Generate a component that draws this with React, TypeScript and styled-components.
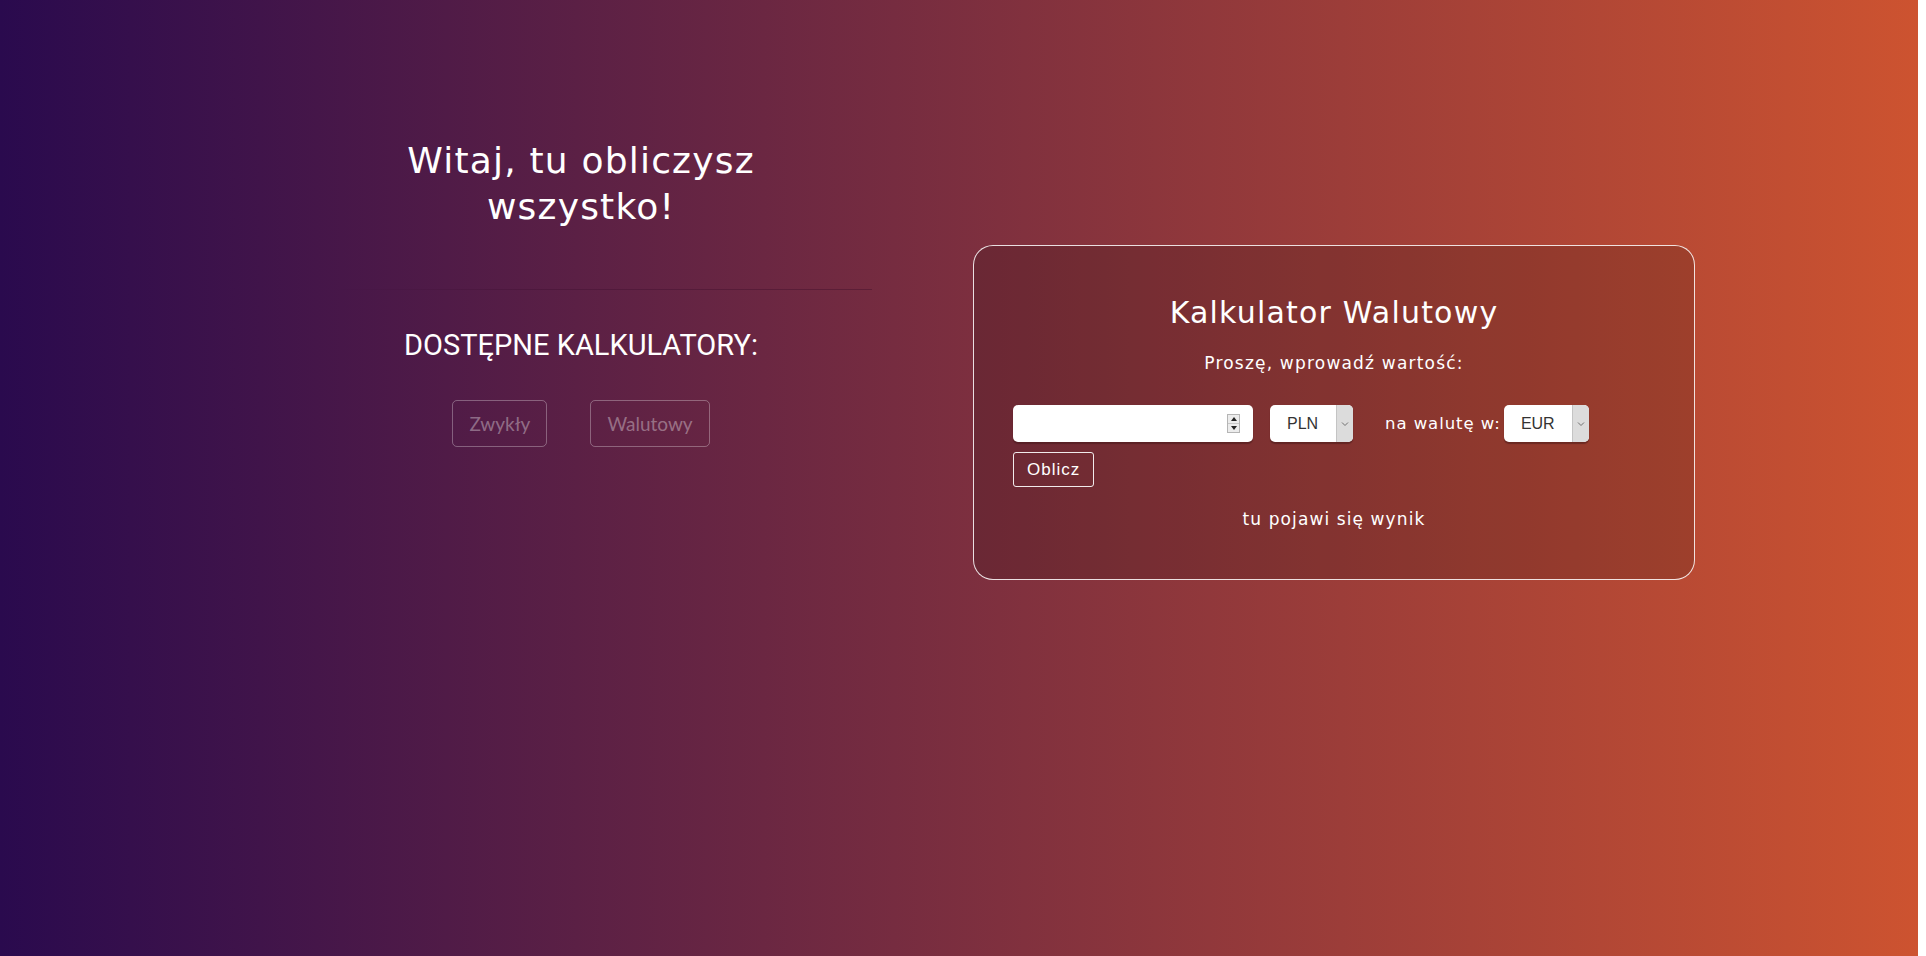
import React from "react";
import styled, { createGlobalStyle } from "styled-components";

const Global = createGlobalStyle`
  html, body { margin: 0; padding: 0; background: #ffffff; }
  body { font-family: "DejaVu Sans", sans-serif; }
  * { box-sizing: border-box; }
`;

const Page = styled.div`
  width: calc(100% - 8px);
  min-height: 100vh;
  background: linear-gradient(to right, #2a0a4e 0%, #cd5330 100%);
  display: flex;
  align-items: flex-start;
  color: #fff;
`;

const LeftColumn = styled.section`
  margin-left: 311px;
  width: 540px;
  padding-top: 138px;
  display: flex;
  flex-direction: column;
  align-items: center;
`;

const Welcome = styled.h1`
  margin: 0;
  font-family: "DejaVu Sans", sans-serif;
  font-weight: normal;
  font-size: 36px;
  line-height: 46px;
  letter-spacing: 1.2px;
  text-align: center;
  width: 400px;
  color: #fff;
`;

const Divider = styled.hr`
  align-self: stretch;
  margin: 59px 0 0 14px;
  width: 547px;
  height: 1px;
  border: 0;
  background: linear-gradient(to right, rgba(40, 0, 30, 0) 0%, rgba(40, 0, 30, 0.22) 40%, rgba(40, 0, 30, 0.3) 100%);
`;

const Subheading = styled.h2`
  margin: 38px 0 0 0;
  font-family: Roboto, sans-serif;
  font-weight: normal;
  font-size: 29px;
  line-height: 34px;
  text-transform: uppercase;
  color: #fff;
`;

const ButtonGroup = styled.div`
  display: flex;
  gap: 43px;
  margin-top: 38px;
`;

const NavButton = styled.button`
  height: 47px;
  padding: 0 16px;
  background: transparent;
  border: 1px solid rgba(255, 255, 255, 0.3);
  border-radius: 5px;
  font-family: Lato, sans-serif;
  font-size: 19px;
  color: rgba(255, 255, 255, 0.36);
  cursor: pointer;
`;

const Card = styled.section`
  margin-left: 122px;
  margin-top: 245px;
  width: 722px;
  height: 335px;
  border: 1px solid rgba(255, 255, 255, 0.85);
  border-radius: 20px;
  background: rgba(0, 0, 0, 0.15);
  padding: 49px 39px 0 39px;
  display: flex;
  flex-direction: column;
`;

const CardTitle = styled.h2`
  margin: 0;
  text-align: center;
  font-family: "DejaVu Sans", sans-serif;
  font-weight: normal;
  font-size: 30px;
  line-height: 36px;
  letter-spacing: 1.2px;
  color: #fff;
`;

const Prompt = styled.p`
  margin: 21px 0 0 0;
  text-align: center;
  font-size: 17px;
  line-height: 22px;
  letter-spacing: 1.2px;
  color: #fff;
`;

const Form = styled.form`
  margin-top: 31px;
  display: flex;
  flex-direction: column;
  align-items: flex-start;
  gap: 10px;
`;

const Controls = styled.div`
  display: flex;
  align-items: center;
`;

const NumberWrap = styled.div`
  position: relative;
  width: 240px;
  height: 37px;
`;

const NumberInput = styled.input`
  width: 100%;
  height: 100%;
  border: 0;
  border-radius: 5px;
  background: #fff;
  box-shadow: 0 2px 1px rgba(60, 20, 20, 0.45);
  padding: 0 30px 0 8px;
  font-family: "Liberation Sans", Arial, sans-serif;
  font-size: 16px;
  outline: none;
  -moz-appearance: textfield;
  &::-webkit-outer-spin-button,
  &::-webkit-inner-spin-button {
    -webkit-appearance: none;
    margin: 0;
  }
`;

const Spinner = styled.div`
  position: absolute;
  right: 13px;
  top: 9px;
  width: 13px;
  height: 19px;
  border: 1px solid #b5b5b5;
  background: #ececec;
  display: flex;
  flex-direction: column;
`;

const SpinHalf = styled.div<{ $down?: boolean }>`
  flex: 1;
  display: flex;
  align-items: center;
  justify-content: center;
  border-top: ${(p) => (p.$down ? "1px solid #c8c8c8" : "0")};
  &::after {
    content: "";
    width: 0;
    height: 0;
    border-left: 3px solid transparent;
    border-right: 3px solid transparent;
    ${(p) => (p.$down ? "border-top: 4px solid #222;" : "border-bottom: 4px solid #222;")}
  }
`;

const SelectBox = styled.div<{ $w: number; $ml: number }>`
  position: relative;
  width: ${(p) => p.$w}px;
  height: 37px;
  margin-left: ${(p) => p.$ml}px;
  border-radius: 5px;
  background: #fff;
  box-shadow: 0 2px 1px rgba(60, 20, 20, 0.45);
  overflow: hidden;
`;

const NativeSelect = styled.select`
  appearance: none;
  -webkit-appearance: none;
  width: 100%;
  height: 100%;
  border: 0;
  background: transparent;
  padding: 0 22px 0 17px;
  font-family: "Liberation Sans", Arial, sans-serif;
  font-size: 16px;
  color: #333;
  outline: none;
`;

const SelectArrow = styled.div`
  position: absolute;
  top: 0;
  right: 0;
  bottom: 0;
  width: 17px;
  background: #dcdcdc;
  border-left: 1px solid #c4c4c4;
  display: flex;
  align-items: center;
  justify-content: center;
  pointer-events: none;
`;

const Label = styled.span`
  margin-left: 32px;
  margin-right: 3px;
  font-size: 16.5px;
  letter-spacing: 0.95px;
  color: #fff;
  white-space: nowrap;
`;

const SubmitButton = styled.button`
  height: 35px;
  padding: 0 13px;
  background: transparent;
  border: 1px solid rgba(255, 255, 255, 0.9);
  border-radius: 3px;
  font-family: "Liberation Sans", Arial, sans-serif;
  font-size: 17px;
  letter-spacing: 1px;
  color: #fff;
  cursor: pointer;
`;

const Result = styled.p`
  margin: 21px 0 0 0;
  text-align: center;
  font-size: 17px;
  line-height: 22px;
  letter-spacing: 1.1px;
  color: #fff;
`;

const Chevron = () => (
  <svg width="8" height="6" viewBox="0 0 8 6" fill="none">
    <path d="M1 1.5 L4 4.5 L7 1.5" stroke="#707070" strokeWidth="1" />
  </svg>
);

const Select: React.FC<{ value: string; options: string[]; w: number; ml: number }> = ({ value, options, w, ml }) => (
  <SelectBox $w={w} $ml={ml}>
    <NativeSelect defaultValue={value}>
      {options.map((o) => (
        <option key={o} value={o}>
          {o}
        </option>
      ))}
    </NativeSelect>
    <SelectArrow>
      <Chevron />
    </SelectArrow>
  </SelectBox>
);

const currencies = ["PLN", "EUR", "USD", "GBP", "CHF"];

export default function App() {
  return (
    <>
      <Global />
      <Page>
        <LeftColumn>
          <Welcome>Witaj, tu obliczysz wszystko!</Welcome>
          <Divider />
          <Subheading>Dostępne kalkulatory:</Subheading>
          <ButtonGroup>
            <NavButton>Zwykły</NavButton>
            <NavButton>Walutowy</NavButton>
          </ButtonGroup>
        </LeftColumn>
        <Card>
          <CardTitle>Kalkulator Walutowy</CardTitle>
          <Prompt>Proszę, wprowadź wartość:</Prompt>
          <Form onSubmit={(e) => e.preventDefault()}>
            <Controls>
              <NumberWrap>
                <NumberInput type="number" />
                <Spinner>
                  <SpinHalf />
                  <SpinHalf $down />
                </Spinner>
              </NumberWrap>
              <Select value="PLN" options={currencies} w={83} ml={17} />
              <Label>na walutę w:</Label>
              <Select value="EUR" options={currencies} w={85} ml={0} />
            </Controls>
            <SubmitButton type="submit">Oblicz</SubmitButton>
          </Form>
          <Result>tu pojawi się wynik</Result>
        </Card>
      </Page>
    </>
  );
}
